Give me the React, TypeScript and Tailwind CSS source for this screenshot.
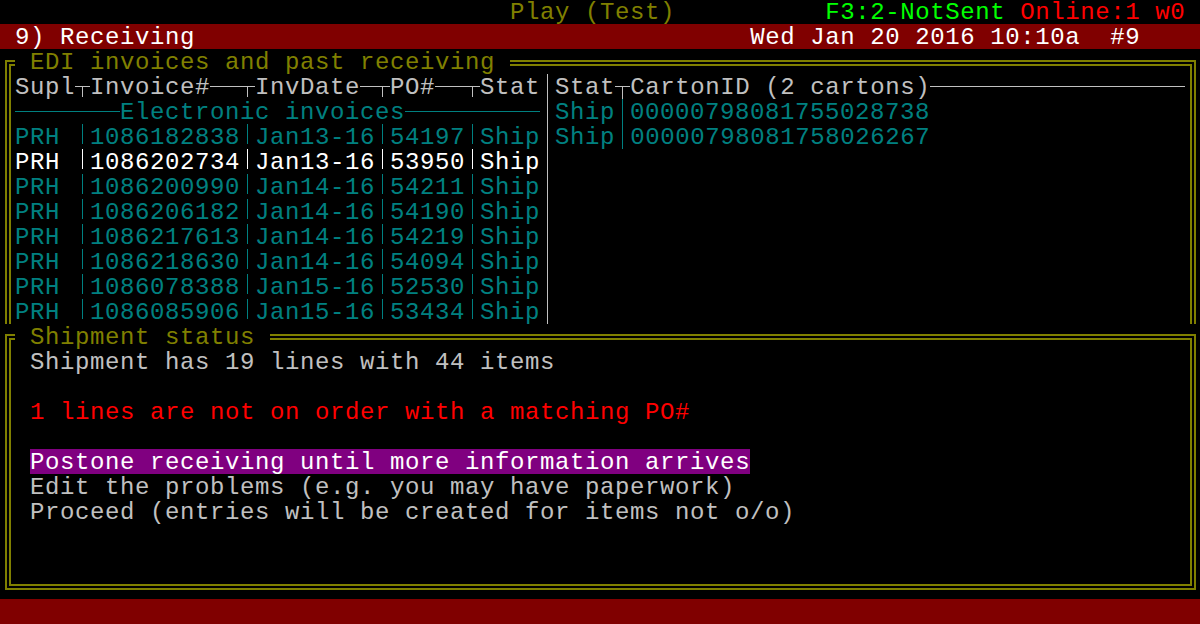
import React from "react";

const GRAY = "text-[#c0c0c0]";
const TEAL = "text-[#008080]";
const WHITE = "text-[#ffffff]";
const OLIVE = "text-[#808000]";

function HL({ w, bg }: { w: string; bg: string }) {
  return (
    <div className={`${w} shrink-0 pt-[12px]`}>
      <div className={`h-px ${bg}`} />
    </div>
  );
}

function Tee({ bg, full }: { bg: string; full?: boolean }) {
  return (
    <div className="w-[15px] shrink-0 pt-[12px] flex flex-col">
      <div className={`h-px ${bg}`} />
      <div className={`ml-[7px] w-px ${full ? "h-[12px]" : "h-[10px]"} ${bg}`} />
    </div>
  );
}

function VB({ bg, full }: { bg: string; full?: boolean }) {
  return (
    <div className="w-[15px] shrink-0 pl-[7px]">
      <div className={`w-px ${full ? "h-[25px]" : "h-[20px]"} ${bg}`} />
    </div>
  );
}

function Row({ children, className = "" }: { children?: React.ReactNode; className?: string }) {
  return <div className={`flex h-[25px] whitespace-pre ${className}`}>{children}</div>;
}

type Inv = { inv: string; date: string; po: string };
const invoices: Inv[] = [
  { inv: "1086182838", date: "Jan13-16", po: "54197" },
  { inv: "1086202734", date: "Jan13-16", po: "53950" },
  { inv: "1086200990", date: "Jan14-16", po: "54211" },
  { inv: "1086206182", date: "Jan14-16", po: "54190" },
  { inv: "1086217613", date: "Jan14-16", po: "54219" },
  { inv: "1086218630", date: "Jan14-16", po: "54094" },
  { inv: "1086078388", date: "Jan15-16", po: "52530" },
  { inv: "1086085906", date: "Jan15-16", po: "53434" },
];
const cartons = ["00000798081755028738", "00000798081758026267"];

function FrameTop({ title, offset }: { title: string; offset: "upper" | "lower" }) {
  const mt = offset === "upper" ? "mt-[11px]" : "mt-[10px]";
  const hh = offset === "upper" ? "h-[14px]" : "h-[15px]";
  return (
    <Row>
      <div className="w-[15px] shrink-0">
        <div className={`ml-[5px] w-[10px] ${mt} ${hh} border-l-[6px] border-t-[6px] border-double border-[#808000]`} />
      </div>
      <span className={OLIVE}>{title}</span>
      <div className="flex-1">
        <div className={`${mt} h-[6px] border-t-[6px] border-double border-[#808000]`} />
      </div>
      <div className="w-[15px] shrink-0">
        <div className={`w-[11px] ${mt} ${hh} border-r-[6px] border-t-[6px] border-double border-[#808000]`} />
      </div>
    </Row>
  );
}

export default function App() {
  return (
    <div className="w-[1200px] h-[624px] overflow-hidden bg-black font-['Liberation_Mono',monospace] text-[24px] tracking-[0.6px] leading-[27px]">
      <div className="-mt-px">
        {/* Row 0 */}
        <Row>
          <span>{" ".repeat(34)}</span>
          <span className={OLIVE}>Play (Test)</span>
          <span>{" ".repeat(10)}</span>
          <span className="text-[#00ff00]">F3:2-NotSent</span>
          <span> </span>
          <span className="text-[#ff0000]">Online:1 w0</span>
        </Row>
        {/* Row 1 */}
        <Row className="bg-[#800000] text-white">
          <span> 9) Receiving</span>
          <span>{" ".repeat(37)}</span>
          <span>Wed Jan 20 2016 10:10a  #9</span>
        </Row>

        {/* Upper frame */}
        <FrameTop title=" EDI invoices and past receiving " offset="upper" />
        <div className="ml-[5px] mr-[4px] pl-[4px] pr-[5px] border-x-[6px] border-double border-[#808000]">
          <Row className={GRAY}>
            <span>Supl</span>
            <Tee bg="bg-[#c0c0c0]" />
            <span>Invoice#</span>
            <HL w="w-[30px]" bg="bg-[#c0c0c0]" />
            <Tee bg="bg-[#c0c0c0]" />
            <span>InvDate</span>
            <HL w="w-[15px]" bg="bg-[#c0c0c0]" />
            <Tee bg="bg-[#c0c0c0]" />
            <span>PO#</span>
            <HL w="w-[30px]" bg="bg-[#c0c0c0]" />
            <Tee bg="bg-[#c0c0c0]" />
            <span>Stat</span>
            <VB bg="bg-[#c0c0c0]" full />
            <span>Stat</span>
            <Tee bg="bg-[#c0c0c0]" full />
            <span>CartonID (2 cartons)</span>
            <HL w="flex-1" bg="bg-[#c0c0c0]" />
          </Row>
          <Row className={TEAL}>
            <HL w="w-[105px]" bg="bg-[#008080]" />
            <span>Electronic invoices</span>
            <HL w="w-[135px]" bg="bg-[#008080]" />
            <VB bg="bg-[#c0c0c0]" full />
            <span>Ship</span>
            <VB bg="bg-[#008080]" full />
            <span>{cartons[0]}</span>
          </Row>
          {invoices.map((r, i) => {
            const sel = i === 1;
            const txt = sel ? WHITE : TEAL;
            const bg = sel ? "bg-[#ffffff]" : "bg-[#008080]";
            return (
              <Row key={r.inv} className={txt}>
                <span>PRH </span>
                <VB bg={bg} />
                <span>{r.inv}</span>
                <VB bg={bg} />
                <span>{r.date}</span>
                <VB bg={bg} />
                <span>{r.po}</span>
                <VB bg={bg} />
                <span>Ship</span>
                <VB bg="bg-[#c0c0c0]" full />
                {i === 0 && (
                  <>
                    <span className={TEAL}>Ship</span>
                    <VB bg="bg-[#008080]" full />
                    <span className={TEAL}>{cartons[1]}</span>
                  </>
                )}
              </Row>
            );
          })}
        </div>

        {/* Lower frame */}
        <FrameTop title=" Shipment status " offset="lower" />
        <div className="ml-[5px] mr-[4px] mb-[9px] pl-[4px] pr-[5px] pb-[10px] border-x-[6px] border-b-[6px] border-double border-[#808000]">
          <Row className={GRAY}>
            <span> Shipment has 19 lines with 44 items</span>
          </Row>
          <Row />
          <Row className="text-[#ff0000]">
            <span> 1 lines are not on order with a matching PO#</span>
          </Row>
          <Row />
          <Row>
            <span> </span>
            <span className="bg-[#800080] text-white">Postone receiving until more information arrives</span>
          </Row>
          <Row className={GRAY}>
            <span> Edit the problems (e.g. you may have paperwork)</span>
          </Row>
          <Row className={GRAY}>
            <span> Proceed (entries will be created for items not o/o)</span>
          </Row>
          <Row />
          <Row />
        </div>

        {/* Bottom bar */}
        <Row className="bg-[#800000]" />
      </div>
    </div>
  );
}
